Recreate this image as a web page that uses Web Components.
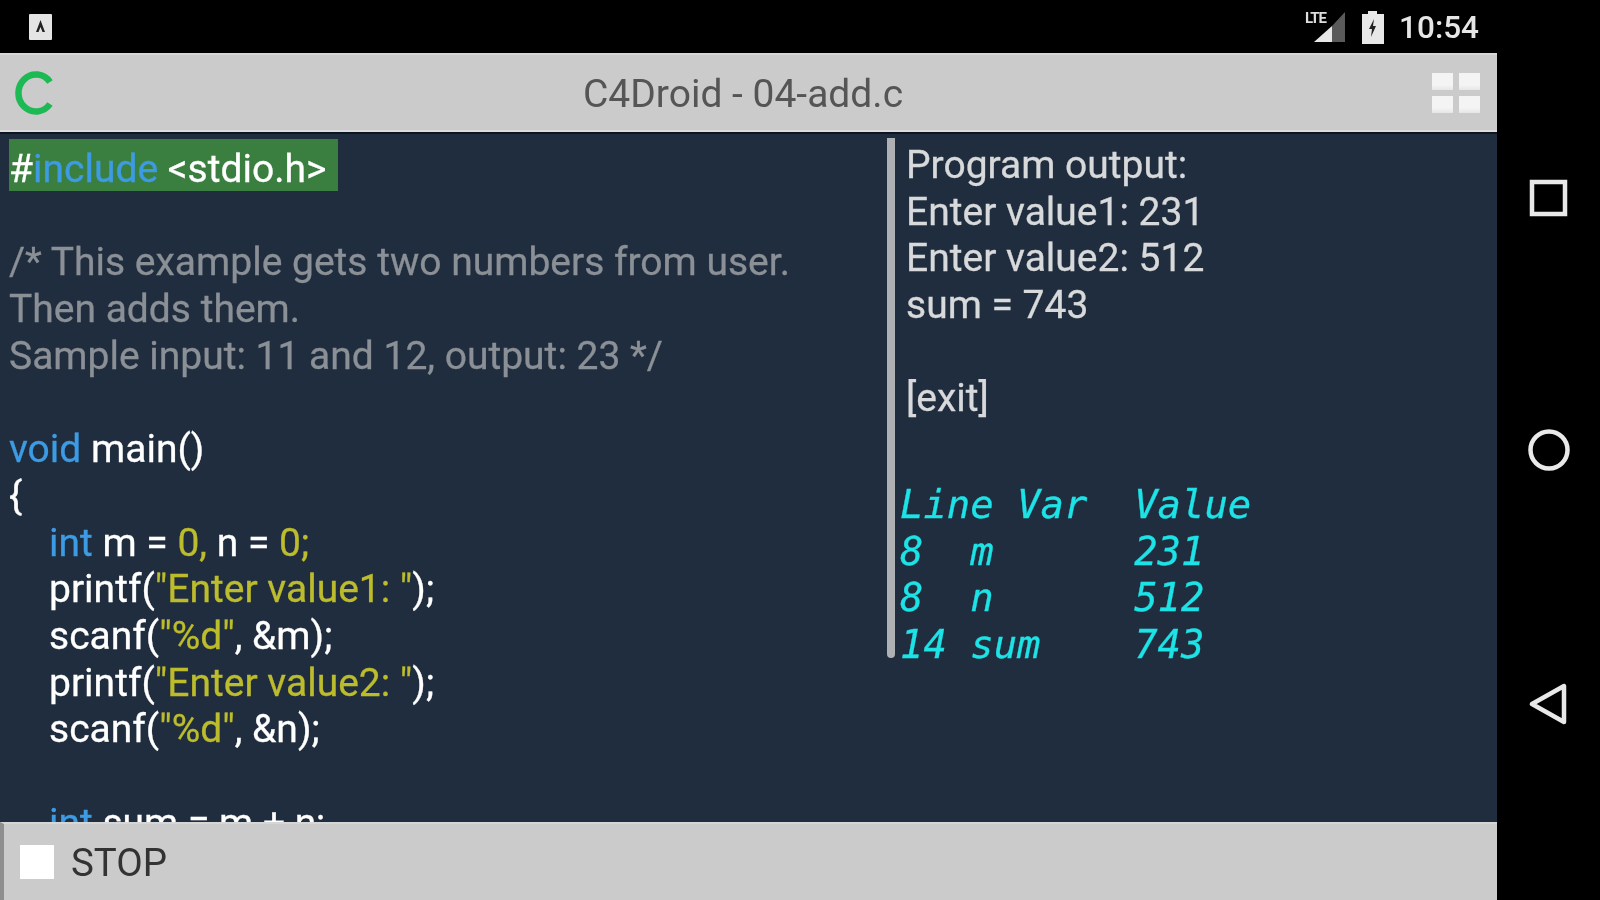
<!DOCTYPE html>
<html>
<head>
<meta charset="utf-8">
<title>C4Droid</title>
<style>
  html, body { margin: 0; height: 100%; background: #000; overflow: hidden; }
  body { font-family: Roboto, "Liberation Sans", sans-serif; }
  c4-app { width: 1600px; height: 900px; }
</style>
</head>
<body>
<c4-app>
  <c4-status-bar slot="status" time="10:54"></c4-status-bar>
  <c4-toolbar slot="toolbar">C4Droid - 04-add.c</c4-toolbar>
  <c4-code-pane slot="code"></c4-code-pane>
  <c4-output-pane slot="output"></c4-output-pane>
  <c4-stop-bar slot="footer">STOP</c4-stop-bar>
  <c4-nav-bar slot="nav"></c4-nav-bar>
</c4-app>

<script>
class C4App extends HTMLElement {
  constructor () {
    super();
    this.attachShadow({ mode: 'open' }).innerHTML = `<style>
        :host { display: grid; grid-template-columns: 1497px 103px; grid-template-rows: 53px 1fr; background: #000; filter: blur(.6px); }
        .status { grid-column: 1 / 3; display: block; }
        .main { display: flex; flex-direction: column; min-height: 0; height: 847px; }
        .split { flex: 1; min-height: 0; display: grid; grid-template-columns: 887px 8px 1fr; background: #1f2d3e; }
        .bar { margin-top: 5px; height: 520px; background: #aeb0b3; border-radius: 0 0 4px 4px; }
      </style>
      <div class="status"><slot name="status"></slot></div>
      <div class="main">
        <slot name="toolbar"></slot>
        <div class="split">
          <slot name="code"></slot>
          <div class="bar"></div>
          <slot name="output"></slot>
        </div>
        <slot name="footer"></slot>
      </div>
      <slot name="nav"></slot>`;
  }
}

class C4StatusBar extends HTMLElement {
  connectedCallback () {
    this.attachShadow({ mode: 'open' }).innerHTML = `<style>
        :host { display: flex; align-items: center; height: 53px; padding: 0 121px 0 28px; box-sizing: border-box; color: #e6e6e6; }
        .spacer { flex: 1; }
        svg { display: block; }
        .time { font: 500 31.5px Roboto, sans-serif; margin-left: 14px; padding-top: 2px; }
      </style>
      <svg width="25" height="28" viewBox="0 0 25 28">
        <rect x="1" y="1" width="23" height="26" rx="1" fill="#e4e4e4"/>
        <path d="M12.5 7 L17 19 H14.5 L12.5 14 L10.5 19 H8 Z" fill="#222"/>
      </svg>
      <div class="spacer"></div>
      <svg width="42" height="36" viewBox="0 0 42 36">
        <text x="0" y="14" font-family="Roboto, sans-serif" font-size="15" font-weight="700" fill="#ddd" textLength="22">LTE</text>
        <path d="M9 33 L27 17 V33 Z" fill="#e8e8e8"/>
        <path d="M27 17 L40 3 V33 H27 Z" fill="#5a5a5a"/>
      </svg>
      <svg style="margin-left:14px" width="24" height="36" viewBox="0 0 24 36">
        <path d="M7 2 H16 V5 H23 V35 H1 V5 H7 Z" fill="#e8e8e8"/>
        <path d="M13 10 L8 20 H11 L10 28 L15 17 H12 Z" fill="#222"/>
      </svg>
      <div class="time">${this.getAttribute('time')}</div>`;
  }
}

class C4Toolbar extends HTMLElement {
  constructor () {
    super();
    this.attachShadow({ mode: 'open' }).innerHTML = `<style>
        :host { display: flex; flex: none; align-items: center; height: 80px; box-sizing: border-box; background: #cbcbcb; border-top: 2px solid #d8d8d8; border-bottom: 3px solid #dcdcdc; position: relative; padding: 0 17px 0 14px; color: #555; font-size: 39px; }
        .logo { flex: none; }
        .title { flex: 1; text-align: center; margin: 2px -40px 0 -40px; }
        .grid { flex: none; display: grid; grid-template-columns: 21px 21px; grid-auto-rows: 17px; gap: 6px 6px; }
        .grid i { background: linear-gradient(#f4f4f4 70%, #e6e6e6); display: block; }
        :host::after { content: ""; position: absolute; left: 0; right: 0; bottom: -4px; height: 2px; background: #0e1622; }
      </style>
      <svg class="logo" width="40" height="46" viewBox="0 0 40 46">
        <path d="M36 12 A17.5 18.5 0 1 0 36 34" fill="none" stroke="#1db954" stroke-width="6.5"/>
      </svg>
      <div class="title"><slot></slot></div>
      <div class="grid"><i></i><i></i><i></i><i></i></div>`;
  }
}

class C4CodePane extends HTMLElement {
  constructor () {
    super();
    this.lines = [
      [],
      [],
      [['c', '/* This example gets two numbers from user.']],
      [['c', 'Then adds them.']],
      [['c', 'Sample input: 11 and 12, output: 23 */']],
      [],
      [['k', 'void'], ['t', ' main()']],
      [['t', '{']],
      [['i', ''], ['k', 'int'], ['t', ' m = '], ['s', '0,'], ['t', ' n = '], ['s', '0;']],
      [['i', ''], ['t', 'printf('], ['s', '"Enter value1: "'], ['t', ');']],
      [['i', ''], ['t', 'scanf('], ['s', '"%d"'], ['t', ', &m);']],
      [['i', ''], ['t', 'printf('], ['s', '"Enter value2: "'], ['t', ');']],
      [['i', ''], ['t', 'scanf('], ['s', '"%d"'], ['t', ', &n);']],
      [],
      [['i', ''], ['k', 'int'], ['t', ' sum = m + n;']]
    ];
  }
  connectedCallback () {
    const rows = this.lines.map((parts, n) => {
      if (n === 0) {
        return '<div class="line"><span class="hl">#<span class="k">include</span> &lt;stdio.h&gt;</span></div>';
      }
      const html = parts.map(([kind, text]) => {
        const safe = text.replace(/&/g, '&amp;').replace(/</g, '&lt;');
        return `<span class="${kind}">${safe}</span>`;
      }).join('');
      return `<div class="line">${html || '&nbsp;'}</div>`;
    }).join('');
    this.attachShadow({ mode: 'open' }).innerHTML = `<style>
        :host { display: block; overflow: hidden; padding: 13px 0 0 9px; box-sizing: border-box; min-height: 0; color: #fff; font: 39px/46.7px Roboto, sans-serif; -webkit-text-stroke: .3px; }
        .line { white-space: pre; height: 46.7px; }
        .k { color: #3d9be4; }
        .c { color: #8b9096; }
        .s { color: #bcbc2c; }
        .i { display: inline-block; width: 40px; }
        .hl { display: inline-block; background: #3b7f40; height: 52px; margin-top: -7px; line-height: 61px; padding-right: 12px; vertical-align: top; }
      </style>${rows}`;
  }
}

class C4OutputPane extends HTMLElement {
  constructor () {
    super();
    this.attachShadow({ mode: 'open' }).innerHTML = `<style>
        :host { display: block; overflow: hidden; padding: 9px 0 0 11px; box-sizing: border-box; color: #d8d9da; font: 39px/46.7px Roboto, sans-serif; -webkit-text-stroke: .3px; }
        .row { white-space: pre; height: 46.7px; }
        .log { margin: 13px 0 0 -6px; color: #1de2e6; font: oblique 38.9px/46.7px "DejaVu Sans Mono", monospace; }
      </style>
      <div class="row">Program output:</div>
      <div class="row">Enter value1: 231</div>
      <div class="row">Enter value2: 512</div>
      <div class="row">sum = 743</div>
      <div class="row"></div>
      <div class="row">[exit]</div>
      <div class="row"></div>
      <div class="log"><div class="row">Line Var  Value</div><div class="row">8  m      231</div><div class="row">8  n      512</div><div class="row">14 sum    743</div></div>`;
  }
}

class C4StopBar extends HTMLElement {
  constructor () {
    super();
    this.attachShadow({ mode: 'open' }).innerHTML = `<style>
        :host { display: flex; flex: none; align-items: center; height: 78px; box-sizing: border-box; background: #cbcbcb; border-top: 2px solid #d6d6d6; border-left: 4px solid #8f8f8f; padding-left: 16px; color: #333; font-size: 38.5px; gap: 17px; }
        .box { width: 34px; height: 34px; background: #fff; }
      </style>
      <div class="box"></div>
      <slot></slot>`;
  }
}

class C4NavBar extends HTMLElement {
  constructor () {
    super();
    this.attachShadow({ mode: 'open' }).innerHTML = `<style>
        :host { display: flex; flex-direction: column; align-items: center; height: 847px; box-sizing: border-box; padding: 125px 0 0 0; gap: 210px; }
        svg { display: block; flex: none; }
      </style>
      <svg width="40" height="40" viewBox="0 0 40 40"><rect x="3" y="4" width="33" height="32" fill="none" stroke="#e9e9e9" stroke-width="4.5"/></svg>
      <svg width="44" height="44" viewBox="0 0 44 44"><circle cx="22" cy="22" r="18.5" fill="none" stroke="#e9e9e9" stroke-width="4.5"/></svg>
      <svg width="40" height="44" viewBox="0 0 40 44"><path d="M3 22 L35 4 V40 Z" fill="none" stroke="#e9e9e9" stroke-width="4.5" stroke-linejoin="round"/></svg>`;
  }
}

customElements.define('c4-app', C4App);
customElements.define('c4-status-bar', C4StatusBar);
customElements.define('c4-toolbar', C4Toolbar);
customElements.define('c4-code-pane', C4CodePane);
customElements.define('c4-output-pane', C4OutputPane);
customElements.define('c4-stop-bar', C4StopBar);
customElements.define('c4-nav-bar', C4NavBar);
</script>
</body>
</html>
